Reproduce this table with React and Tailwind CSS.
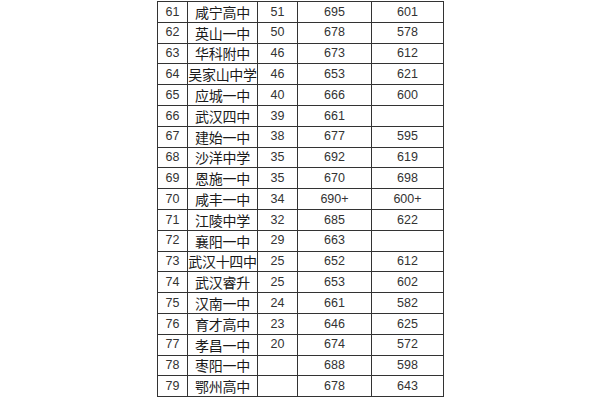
import React from 'react';

const rows = [
  ['61', '咸宁高中', '51', '695', '601'],
  ['62', '英山一中', '50', '678', '578'],
  ['63', '华科附中', '46', '673', '612'],
  ['64', '吴家山中学', '46', '653', '621'],
  ['65', '应城一中', '40', '666', '600'],
  ['66', '武汉四中', '39', '661', ''],
  ['67', '建始一中', '38', '677', '595'],
  ['68', '沙洋中学', '35', '692', '619'],
  ['69', '恩施一中', '35', '670', '698'],
  ['70', '咸丰一中', '34', '690+', '600+'],
  ['71', '江陵中学', '32', '685', '622'],
  ['72', '襄阳一中', '29', '663', ''],
  ['73', '武汉十四中', '25', '652', '612'],
  ['74', '武汉睿升', '25', '653', '602'],
  ['75', '汉南一中', '24', '661', '582'],
  ['76', '育才高中', '23', '646', '625'],
  ['77', '孝昌一中', '20', '674', '572'],
  ['78', '枣阳一中', '', '688', '598'],
  ['79', '鄂州高中', '', '678', '643'],
];

const num = "font-['Liberation_Sans',Arial,sans-serif] text-[12.5px] text-[#333]";
const cjk = "font-['Noto_Sans_CJK_SC',sans-serif] text-[14px] text-[#1a1a1a] tracking-[-0.3px]";

export default function App() {
  return (
    <div className="w-[600px] h-[400px] bg-white overflow-hidden pt-[1px] pl-[157px]">
      <div className="grid grid-cols-[30px_70px_40px_74px_72px] auto-rows-[20.8px] w-fit border-l border-t border-[#333]">
        {rows.map((r) => (
          <React.Fragment key={r[0]}>
            {r.map((cell, i) => (
              <div
                key={i}
                className={`flex items-center justify-center whitespace-nowrap border-r border-b border-[#333] leading-none ${
                  i === 1 ? cjk : num
                }`}
              >
                {cell}
              </div>
            ))}
          </React.Fragment>
        ))}
      </div>
    </div>
  );
}
